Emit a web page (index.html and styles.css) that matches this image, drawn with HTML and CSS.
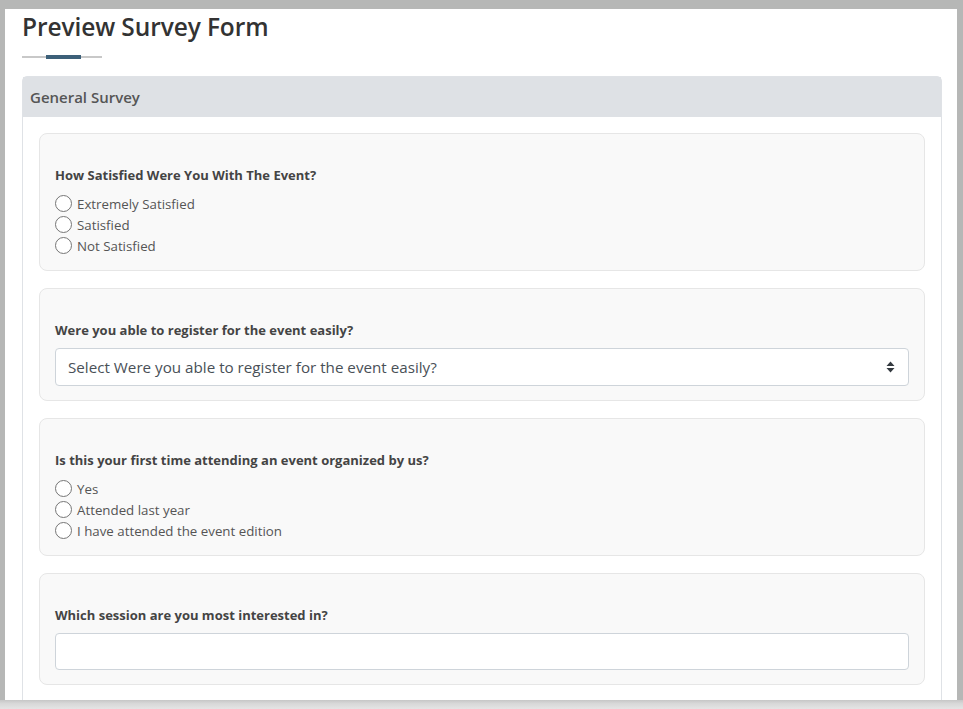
FILE: index.html
```html
<!DOCTYPE html>
<html>
<head>
<meta charset="utf-8">
<link rel="stylesheet" href="styles.css">
</head>
<body>
<div class="screen">
  <div class="page">
    <h1 class="title">Preview Survey Form</h1>
    <div class="rule"><span class="rule-mark"></span></div>
    <div class="card">
      <div class="card-header">General Survey</div>
      <div class="card-body">
        <div class="question">
          <div class="q-label">How Satisfied Were You With The Event?</div>
          <div class="options">
            <label class="option"><span class="radio"></span>Extremely Satisfied</label>
            <label class="option"><span class="radio"></span>Satisfied</label>
            <label class="option"><span class="radio"></span>Not Satisfied</label>
          </div>
        </div>
        <div class="question">
          <div class="q-label">Were you able to register for the event easily?</div>
          <div class="select">
            <span>Select Were you able to register for the event easily?</span>
            <svg class="select-arrow" width="9" height="12" viewBox="0 0 9 12"><path d="M4.5 0.5 L8.5 5 L0.5 5 Z M0.5 7 L8.5 7 L4.5 11.5 Z" fill="#343a40"/></svg>
          </div>
        </div>
        <div class="question">
          <div class="q-label">Is this your first time attending an event organized by us?</div>
          <div class="options">
            <label class="option"><span class="radio"></span>Yes</label>
            <label class="option"><span class="radio"></span>Attended last year</label>
            <label class="option"><span class="radio"></span>I have attended the event edition</label>
          </div>
        </div>
        <div class="question">
          <div class="q-label">Which session are you most interested in?</div>
          <div class="input"></div>
        </div>
      </div>
    </div>
  </div>
  <div class="bottom-strip"></div>
</div>
</body>
</html>
```

FILE: styles.css
```css
* { box-sizing: border-box; }
html, body { margin: 0; padding: 0; }
body {
  width: 963px;
  height: 709px;
  overflow: hidden;
  background: #b6b7b6;
  font-family: "Open Sans", "Noto Sans", sans-serif;
  color: #555;
}
.screen {
  display: flex;
  flex-direction: column;
  height: 709px;
  padding: 9px 6px 0 5px;
}
.page {
  height: 691px;
  background: #fff;
  overflow: hidden;
  padding: 3px 15px 0 17px;
}
.title {
  margin: 0;
  font-size: 24.5px;
  font-weight: 600;
  line-height: 30px;
  color: #333;
  letter-spacing: -0.1px;
}
.rule {
  margin-top: 14px;
  width: 80px;
  height: 2px;
  background: #c8c8c8;
  position: relative;
}
.rule-mark {
  position: absolute;
  left: 24px;
  top: -1px;
  width: 35px;
  height: 4px;
  background: #3d6079;
}
.card {
  margin-top: 18px;
  border: 1px solid #dfe2e6;
  border-radius: 5px 5px 0 0;
}
.card-header {
  height: 40px;
  background: #dee1e5;
  padding: 0 7px;
  display: flex;
  align-items: center;
  font-size: 15px;
  font-weight: 600;
  color: #555;
}
.card-body {
  padding: 16px 16px 16px 16px;
  display: flex;
  flex-direction: column;
  gap: 17px;
}
.question {
  background: #f9f9f9;
  border: 1px solid #e6e6e6;
  border-radius: 8px;
  padding: 31px 15px 14px 15px;
}
.q-label {
  font-size: 13px;
  font-weight: 700;
  line-height: 20px;
  color: #444;
  margin-bottom: 8px;
}
.question .select, .question .input { margin-top: 1px; }
.options {
  display: flex;
  flex-direction: column;
}
.option {
  display: flex;
  align-items: center;
  height: 21px;
  font-size: 13.3px;
  color: #555;
}
.radio {
  width: 17px;
  height: 17px;
  border: 1px solid #767676;
  border-radius: 50%;
  background: #fff;
  margin-right: 5px;
  flex: none;
}
.select {
  height: 38px;
  background: #fff;
  border: 1px solid #ced4da;
  border-radius: 4px;
  display: flex;
  align-items: center;
  justify-content: space-between;
  padding: 0 13px 0 12px;
  font-size: 15.2px;
  color: #495057;
}
.input {
  height: 37px;
  background: #fff;
  border: 1px solid #ced4da;
  border-radius: 4px;
}
.bottom-strip {
  flex: 1;
  background: linear-gradient(#c6c6c6, #d8d8d8 40%, #e4e4e4);
  margin: 0 -6px 0 -5px;
}
```
